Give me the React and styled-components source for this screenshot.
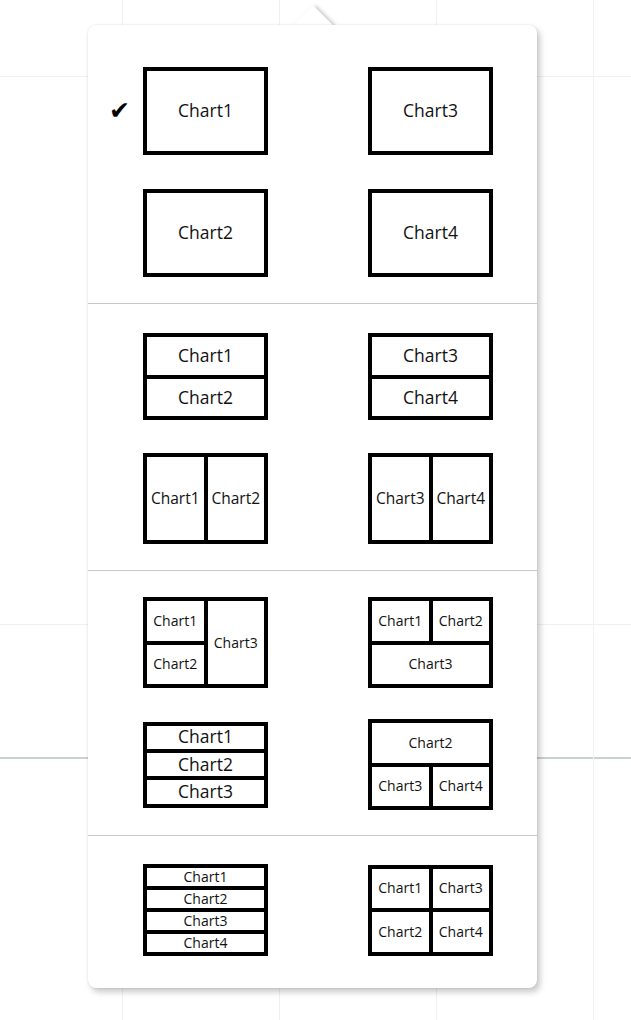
import React from "react";
import styled, { createGlobalStyle } from "styled-components";

const GlobalStyle = createGlobalStyle`
  html, body {
    margin: 0;
    padding: 0;
    background: #ffffff;
  }
  body {
    font-family: "Open Sans", "Noto Sans", sans-serif;
    color: #111;
  }
`;

const faint = "#eef0f1";

// dashboard grid that sits behind the layout picker
const Canvas = styled.div`
  position: relative;
  min-height: 1020px;
  padding: 25px 0 0 88px;
  box-sizing: border-box;
  background:
    linear-gradient(${faint}, ${faint}) 122px 0 / 1px 100% no-repeat,
    linear-gradient(${faint}, ${faint}) 279px 0 / 1px 100% no-repeat,
    linear-gradient(${faint}, ${faint}) 436px 0 / 1px 100% no-repeat,
    linear-gradient(${faint}, ${faint}) 593px 0 / 1px 100% no-repeat,
    linear-gradient(${faint}, ${faint}) 0 76px / 100% 1px no-repeat,
    linear-gradient(${faint}, ${faint}) 0 624px / 100% 1px no-repeat,
    linear-gradient(#c9d2d2, #c9d2d2) 0 757px / 100% 2px no-repeat,
    #ffffff;
`;

const PopoverWrap = styled.div`
  position: relative;
  width: 449px;
`;

const Arrow = styled.div`
  position: absolute;
  top: -14px;
  left: 211px;
  width: 28px;
  height: 28px;
  background: #fff;
  transform: rotate(45deg);
  box-shadow: 2px -2px 4px rgba(0, 0, 0, 0.2);
`;

const Popover = styled.div`
  position: relative;
  z-index: 1;
  background: #fff;
  border-radius: 8px;
  box-shadow: 0 0 2px rgba(0, 0, 0, 0.12), 3px 4px 6px rgba(0, 0, 0, 0.22);
  display: flex;
  flex-direction: column;
`;

const Section = styled.div`
  display: grid;
  grid-template-columns: 125px 125px;
  column-gap: 100px;
  row-gap: ${(p) => p.$gap}px;
  align-items: center;
  padding: ${(p) => p.$pad};
  padding-left: 55px;
  & + & {
    border-top: 1px solid #c8c8c8;
  }
`;

const Option = styled.div`
  position: relative;
  cursor: pointer;
`;

const Check = styled.span`
  position: absolute;
  right: calc(100% + 13px);
  top: 50%;
  transform: translateY(-54%);
  font-family: "DejaVu Sans", sans-serif;
  font-size: 25px;
  line-height: 1;
  color: #000;
`;

const Frame = styled.div`
  box-sizing: border-box;
  width: 125px;
  height: ${(p) => p.$h}px;
  display: grid;
  grid-template-areas: ${(p) => p.$areas};
  grid-auto-columns: 1fr;
  grid-auto-rows: 1fr;
  gap: 4px;
  padding: 4px;
  background: #000;
`;

const Cell = styled.div`
  grid-area: ${(p) => p.$area};
  background: #fff;
  display: flex;
  align-items: center;
  justify-content: center;
  font-size: ${(p) => p.$size}px;
  line-height: 1;
  white-space: nowrap;
  overflow: hidden;
`;

const single = `"a"`;
const twoRows = `"a" "b"`;
const twoCols = `"a b"`;

const sections = [
  {
    pad: "42px 0 26px",
    gap: 34,
    options: [
      { areas: single, h: 88, size: 17.5, charts: ["Chart1"], checked: true },
      { areas: single, h: 88, size: 17.5, charts: ["Chart3"] },
      { areas: single, h: 88, size: 17.5, charts: ["Chart2"] },
      { areas: single, h: 88, size: 17.5, charts: ["Chart4"] },
    ],
  },
  {
    pad: "29px 0 26px",
    gap: 33,
    options: [
      { areas: twoRows, h: 87, size: 17.5, charts: ["Chart1", "Chart2"] },
      { areas: twoRows, h: 87, size: 17.5, charts: ["Chart3", "Chart4"] },
      { areas: twoCols, h: 91, size: 15.5, charts: ["Chart1", "Chart2"] },
      { areas: twoCols, h: 91, size: 15.5, charts: ["Chart3", "Chart4"] },
    ],
  },
  {
    pad: "26px 0 25px",
    gap: 31,
    options: [
      { areas: `"a c" "b c"`, h: 91, size: 14, charts: ["Chart1", "Chart2", "Chart3"] },
      { areas: `"a b" "c c"`, h: 91, size: 14, charts: ["Chart1", "Chart2", "Chart3"] },
      { areas: `"a" "b" "c"`, h: 86, size: 17.5, charts: ["Chart1", "Chart2", "Chart3"] },
      { areas: `"a a" "b c"`, h: 91, size: 14, charts: ["Chart2", "Chart3", "Chart4"] },
    ],
  },
  {
    pad: "28px 0 32px",
    gap: 0,
    options: [
      { areas: `"a" "b" "c" "d"`, h: 92, size: 14, charts: ["Chart1", "Chart2", "Chart3", "Chart4"] },
      { areas: `"a c" "b d"`, h: 91, size: 14, charts: ["Chart1", "Chart2", "Chart3", "Chart4"] },
    ],
  },
];

const slots = ["a", "b", "c", "d"];

const LayoutOption = ({ option }) => (
  <Option>
    {option.checked && <Check>✔</Check>}
    <Frame $areas={option.areas} $h={option.h}>
      {option.charts.map((name, i) => (
        <Cell key={name} $area={slots[i]} $size={option.size}>
          {name}
        </Cell>
      ))}
    </Frame>
  </Option>
);

const App = () => {
  return (
    <>
      <GlobalStyle />
      <Canvas>
        <PopoverWrap>
          <Arrow />
          <Popover>
            {sections.map((section, i) => (
              <Section key={i} $pad={section.pad} $gap={section.gap}>
                {section.options.map((option, j) => (
                  <LayoutOption key={j} option={option} />
                ))}
              </Section>
            ))}
          </Popover>
        </PopoverWrap>
      </Canvas>
    </>
  );
};

export default App;
